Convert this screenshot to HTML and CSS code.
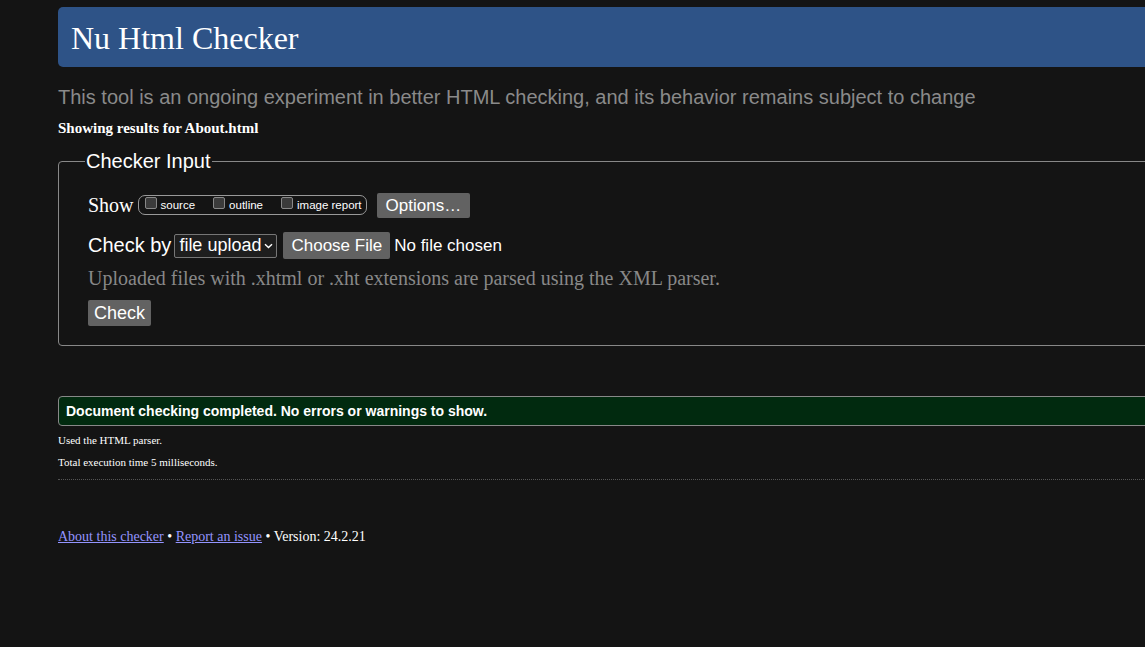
FILE: index.html
```html
<!DOCTYPE html>
<html>
<head>
<meta charset="utf-8">
<title>Nu Html Checker</title>
<link rel="stylesheet" href="styles.css">
</head>
<body>
<div class="page">
  <h1 class="banner">Nu Html Checker</h1>
  <p class="tagline">This tool is an ongoing experiment in better HTML checking, and its behavior remains subject to change</p>
  <p class="showing">Showing results for About.html</p>
  <fieldset class="input">
    <legend>Checker Input</legend>
    <div class="row show-row">
      <span class="show-label">Show</span>
      <span class="opts">
        <label><span class="box"></span>source</label>
        <label><span class="box"></span>outline</label>
        <label><span class="box"></span>image report</label>
      </span>
      <span class="btn options">Options…</span>
    </div>
    <div class="row check-row">
      <span class="checkby">Check by</span>
      <span class="select">file upload <svg width="9" height="6" viewBox="0 0 9 6"><path d="M1 1.2 L4.5 4.6 L8 1.2" fill="none" stroke="#fff" stroke-width="1.4"/></svg></span>
      <span class="btn choose">Choose File</span>
      <span class="nofile">No file chosen</span>
    </div>
    <p class="note">Uploaded files with .xhtml or .xht extensions are parsed using the XML parser.</p>
    <span class="btn check">Check</span>
  </fieldset>
  <div class="success">Document checking completed. No errors or warnings to show.</div>
  <p class="details">Used the HTML parser.</p>
  <p class="details">Total execution time 5 milliseconds.</p>
  <hr class="dots">
  <p class="footer"><a href="#">About this checker</a> • <a href="#">Report an issue</a> • Version: 24.2.21</p>
</div>
</body>
</html>
```
FILE: styles.css
```css
html, body {
  margin: 0;
  padding: 0;
  background: #141414;
  overflow: hidden;
  height: 100%;
}
body {
  font-family: "Liberation Serif", serif;
  color: #fff;
}
.page {
  margin-left: 58px;
  width: 1200px;
  padding-top: 7px;
}
.banner {
  margin: 0;
  height: 60px;
  box-sizing: border-box;
  background: #2e5387;
  border-radius: 5px 0 0 5px;
  font-weight: normal;
  font-size: 32px;
  line-height: 62px;
  padding-left: 13px;
  color: #fff;
}
.tagline {
  margin: 17px 0 0 0;
  font-family: "Liberation Sans", sans-serif;
  font-size: 20px;
  line-height: 26px;
  color: #8a8a8a;
}
.showing {
  margin: 10px 0 0 0;
  font-weight: bold;
  font-size: 15px;
  line-height: 16px;
}
.input {
  margin: 14px 0 0 0;
  border: 1px solid #888;
  border-radius: 4px;
  padding: 17px 29px 19px 29px;
  min-width: 0;
}
.input legend {
  font-family: "Liberation Sans", sans-serif;
  font-size: 20px;
  padding: 0 1px;
  margin-left: -3px;
  color: #fff;
}
.row {
  display: flex;
  align-items: center;
}
.show-row {
  height: 26px;
  margin-top: 2px;
}
.show-label {
  font-size: 20px;
  margin-right: 4px;
}
.opts {
  display: flex;
  align-items: center;
  height: 18px;
  border: 1px solid #999;
  border-radius: 7px;
  padding: 0 4px 0 6px;
  font-family: "Liberation Sans", sans-serif;
  font-size: 11.5px;
  gap: 18px;
}
.opts label {
  display: flex;
  align-items: center;
  line-height: 12px;
}
.box {
  width: 12px;
  height: 12px;
  border: 1px solid #888;
  border-radius: 2px;
  background: #3b3b3b;
  margin-right: 4px;
  margin-top: -4px;
  box-sizing: border-box;
}
.btn {
  display: inline-block;
  background: #626262;
  color: #fff;
  font-family: "Liberation Sans", sans-serif;
  border-radius: 2px;
}
.options {
  margin-left: 10px;
  font-size: 17px;
  padding: 0 9px;
  height: 25px;
  line-height: 25px;
}
.check-row {
  margin-top: 14px;
  height: 27px;
  font-family: "Liberation Sans", sans-serif;
  font-size: 20px;
}
.checkby {
  margin-right: 3px;
}
.select {
  display: inline-flex;
  align-items: center;
  height: 24px;
  box-sizing: border-box;
  border: 1px solid #767676;
  border-radius: 2px;
  background: #1e1e1e;
  font-size: 18px;
  padding: 0 3px 0 4px;
  gap: 3px;
}
.choose {
  margin-left: 6px;
  font-size: 17px;
  height: 27px;
  line-height: 27px;
  padding: 0 8px;
}
.nofile {
  margin-left: 4px;
  font-size: 17px;
}
.note {
  margin: 7px 0 0 0;
  font-size: 20px;
  line-height: 24px;
  color: #888;
}
.check {
  margin-top: 10px;
  font-size: 18px;
  height: 26px;
  line-height: 26px;
  padding: 0 6px;
}
.success {
  margin-top: 50px;
  height: 30px;
  box-sizing: border-box;
  border: 1px solid #888;
  border-radius: 4px 0 0 4px;
  background: #012a0f;
  font-family: "Liberation Sans", sans-serif;
  font-weight: bold;
  font-size: 14px;
  line-height: 28px;
  padding-left: 7px;
}
.details {
  margin: 7px 0 0 0;
  font-size: 11px;
  line-height: 15px;
}
.details + .details {
  margin-top: 7px;
}
.dots {
  margin: 9px 0 0 0;
  border: 0;
  border-top: 1px dotted #555;
  height: 0;
}
.footer {
  margin: 49px 0 0 0;
  font-size: 14px;
  line-height: 16px;
}
.footer a {
  color: #9494ff;
}
```
